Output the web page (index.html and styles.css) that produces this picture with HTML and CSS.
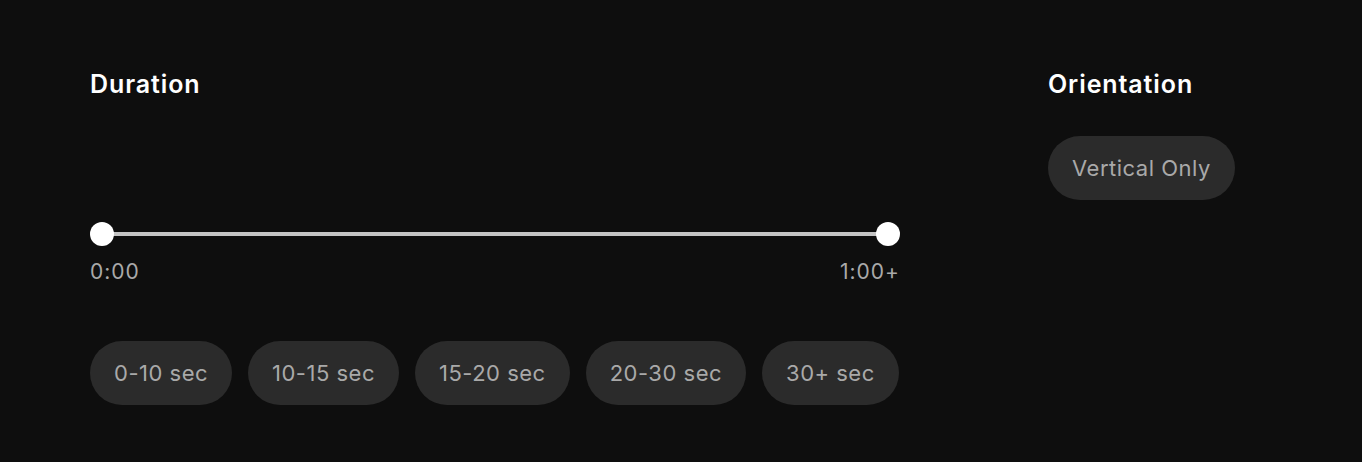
FILE: index.html
```html
<!DOCTYPE html>
<html lang="en">
<head>
  <meta charset="UTF-8">
  <title>Filters</title>
  <link rel="stylesheet" href="styles.css">
</head>
<body>
  <div class="filters">
    <section class="group duration">
      <h3>Duration</h3>
      <div class="range">
        <div class="track"></div>
        <span class="thumb"></span>
        <span class="thumb"></span>
      </div>
      <div class="range-labels">
        <span>0:00</span>
        <span>1:00+</span>
      </div>
      <div class="chips">
        <button class="chip">0-10 sec</button>
        <button class="chip">10-15 sec</button>
        <button class="chip">15-20 sec</button>
        <button class="chip">20-30 sec</button>
        <button class="chip">30+ sec</button>
      </div>
    </section>
    <section class="group">
      <h3>Orientation</h3>
      <div class="chips orient">
        <button class="chip">Vertical Only</button>
      </div>
    </section>
  </div>
</body>
</html>
```
FILE: styles.css
```css
body {
  margin: 0;
  background: #0e0e0e;
  color: #fff;
  font-family: Inter, "Noto Sans", sans-serif;
}
.filters {
  display: flex;
  gap: 148px;
  padding: 67px 90px;
}
h3 {
  margin: 0;
  font-size: 25px;
  font-weight: 600;
  line-height: 34px;
  letter-spacing: 0.9px;
}
.duration {
  width: 810px;
}
.range {
  position: relative;
  height: 24px;
  margin-top: 121px;
  display: flex;
  justify-content: space-between;
  align-items: center;
}
.track {
  position: absolute;
  left: 12px;
  right: 12px;
  top: 10px;
  height: 4px;
  background: #c4c4c4;
}
.thumb {
  position: relative;
  width: 24px;
  height: 24px;
  border-radius: 50%;
  background: #fff;
}
.range-labels {
  display: flex;
  justify-content: space-between;
  margin-top: 12px;
  font-size: 21px;
  line-height: 28px;
  color: #a9a9a9;
  letter-spacing: 1px;
}
.chips {
  display: flex;
  gap: 16px;
  margin-top: 55px;
}
.chips.orient {
  margin-top: 35px;
}
.chip {
  height: 64px;
  padding: 0 24px;
  border: none;
  border-radius: 32px;
  background: #2b2b2b;
  color: #a9a9a9;
  font-family: inherit;
  font-size: 22px;
  letter-spacing: 0.5px;
  cursor: pointer;
}
```
